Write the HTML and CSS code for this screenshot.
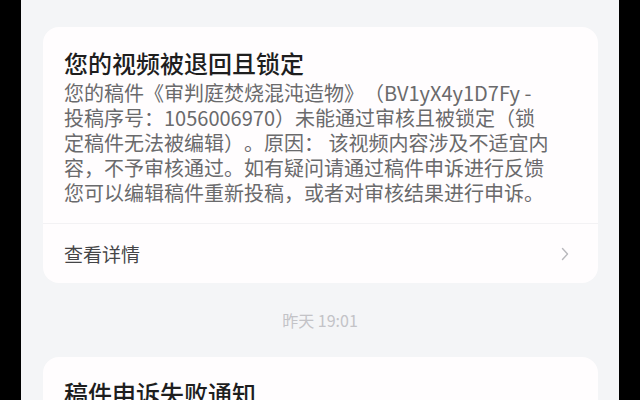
FILE: index.html
```html
<!DOCTYPE html>
<html lang="zh-CN">
<head>
<meta charset="utf-8">
<link rel="stylesheet" href="styles.css">
</head>
<body>
<div class="screen">
  <div class="card">
    <div class="card-main">
      <div class="card-title">您的视频被退回且锁定</div>
      <div class="card-body">您的稿件《审判庭焚烧混沌造物》（BV1yX4y1D7Fy -<br>投稿序号：1056006970）未能通过审核且被锁定（锁<br>定稿件无法被编辑）。原因： 该视频内容涉及不适宜内<br>容，不予审核通过。如有疑问请通过稿件申诉进行反馈<br>您可以编辑稿件重新投稿，或者对审核结果进行申诉。</div>
    </div>
    <div class="card-link">
      <span>查看详情</span>
      <svg class="chev" width="8" height="14" viewBox="0 0 8 14"><polyline points="1.5,1.5 6.5,7 1.5,12.5" fill="none" stroke="#b9b9bd" stroke-width="1.4" stroke-linecap="round" stroke-linejoin="round"/></svg>
    </div>
  </div>
  <div class="time">昨天 19:01</div>
  <div class="card">
    <div class="card-main">
      <div class="card-title">稿件申诉失败通知</div>
    </div>
  </div>
</div>
</body>
</html>
```
FILE: styles.css
```css
html, body {
  margin: 0;
  padding: 0;
  background: #000;
}
body {
  width: 640px;
  height: 400px;
  overflow: hidden;
  font-family: "Noto Sans CJK SC", "Noto Sans", sans-serif;
  text-spacing-trim: space-all;
}
.screen {
  width: 598px;
  height: 400px;
  margin: 0 auto;
  background: #f4f5f7;
  padding-top: 27px;
  box-sizing: border-box;
  overflow: hidden;
}
.card {
  margin: 0 21px 0 22px;
  background: #fffdfe;
  border-radius: 16px;
}
.card-main {
  padding: 20px 21px 18px 21px;
  border-bottom: 1px solid #f3f2f4;
}
.card-title {
  font-size: 24px;
  line-height: 32px;
  font-weight: 500;
  color: #1e1e1e;
  margin-bottom: 1px;
  white-space: nowrap;
}
.card-body {
  font-size: 20px;
  line-height: 25px;
  color: #6a6a6c;
  white-space: nowrap;
}
.card-link {
  height: 59px;
  padding: 0 29px 0 21px;
  display: flex;
  align-items: center;
  justify-content: space-between;
  font-size: 19px;
  color: #454547;
}
.time {
  height: 74px;
  display: flex;
  align-items: center;
  justify-content: center;
  font-size: 16px;
  color: #c3c3c7;
}
```
